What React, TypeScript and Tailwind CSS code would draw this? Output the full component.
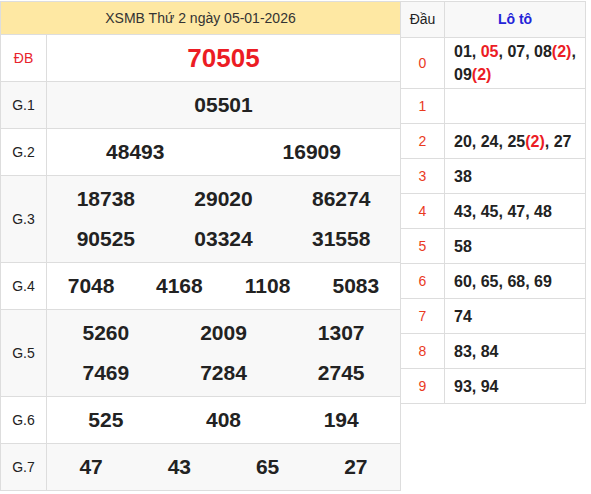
import React from "react";

type Row = {
  label: string;
  red?: boolean;
  lines: string[][];
  tall?: boolean;
  gray?: boolean;
};

const rows: Row[] = [
  { label: "ĐB", red: true, lines: [["70505"]] },
  { label: "G.1", lines: [["05501"]], gray: true },
  { label: "G.2", lines: [["48493", "16909"]] },
  { label: "G.3", lines: [["18738", "29020", "86274"], ["90525", "03324", "31558"]], tall: true, gray: true },
  { label: "G.4", lines: [["7048", "4168", "1108", "5083"]] },
  { label: "G.5", lines: [["5260", "2009", "1307"], ["7469", "7284", "2745"]], tall: true, gray: true },
  { label: "G.6", lines: [["525", "408", "194"]] },
  { label: "G.7", lines: [["47", "43", "65", "27"]], gray: true },
];

const gridCols: Record<number, string> = {
  1: "grid grid-cols-1",
  2: "grid grid-cols-2",
  3: "grid grid-cols-3",
  4: "grid grid-cols-4",
};

const R = ({ children }: { children: React.ReactNode }) => (
  <span className="text-[#ec1c24]">{children}</span>
);

const loto: React.ReactNode[] = [
  <>
    01, <R>05</R>, 07, 08<R>(2)</R>, 09<R>(2)</R>
  </>,
  <></>,
  <>
    20, 24, 25<R>(2)</R>, 27
  </>,
  <>38</>,
  <>43, 45, 47, 48</>,
  <>58</>,
  <>60, 65, 68, 69</>,
  <>74</>,
  <>83, 84</>,
  <>93, 94</>,
];

export default function App() {
  return (
    <div className="bg-white w-[591px] h-[494px] pt-px font-['Liberation_Sans',Arial,sans-serif] text-[#222]">
      <div className="flex items-start">
        {/* Left table */}
        <div className="w-[401px] border border-[#ddd] flex flex-col">
          <div className="h-[32px] bg-[#fee8a3] flex items-center justify-center text-[14px] text-[#333]">
            XSMB Thứ 2 ngày 05-01-2026
          </div>
          {rows.map((r) => (
            <div
              key={r.label}
              className={`flex border-t border-[#ddd] ${r.tall ? "h-[87px]" : "h-[47px]"} ${r.gray ? "bg-[#f8f8f8]" : "bg-white"}`}
            >
              <div
                className={`w-[46px] border-r border-[#ddd] flex items-center justify-center text-[14px] ${r.red ? "text-[#e8232b]" : "text-[#222]"}`}
              >
                {r.label}
              </div>
              <div className="flex-1 flex flex-col justify-center">
                {r.lines.map((line, i) => (
                  <div key={i} className={`${gridCols[line.length]} h-[40px] items-center`}>
                    {line.map((n, j) => (
                      <div
                        key={j}
                        className={`text-center font-bold ${r.red ? "text-[26px] text-[#ec1c24]" : "text-[21px] text-[#222]"}`}
                      >
                        {n}
                      </div>
                    ))}
                  </div>
                ))}
              </div>
            </div>
          ))}
        </div>

        {/* Right table */}
        <div className="w-[185px] border-t border-r border-b border-[#ddd] flex flex-col">
          <div className="flex h-[35px] bg-[#f8f8f8]">
            <div className="w-[44px] border-r border-[#ddd] flex items-center justify-center text-[14px] text-[#222]">
              Đầu
            </div>
            <div className="flex-1 flex items-center justify-center text-[14px] font-bold text-[#2424d8]">
              Lô tô
            </div>
          </div>
          {loto.map((content, i) => (
            <div
              key={i}
              className={`flex border-t border-[#ddd] bg-white ${i === 0 ? "h-[51px]" : "h-[35px]"}`}
            >
              <div className="w-[44px] border-r border-[#ddd] flex items-center justify-center text-[14px] text-[#ea3a1e]">
                {i}
              </div>
              <div className="flex-1 flex items-center pl-[9px] pr-[4px] text-[16px] font-bold leading-[23px] text-[#222]">
                <div>{content}</div>
              </div>
            </div>
          ))}
        </div>
      </div>
    </div>
  );
}
